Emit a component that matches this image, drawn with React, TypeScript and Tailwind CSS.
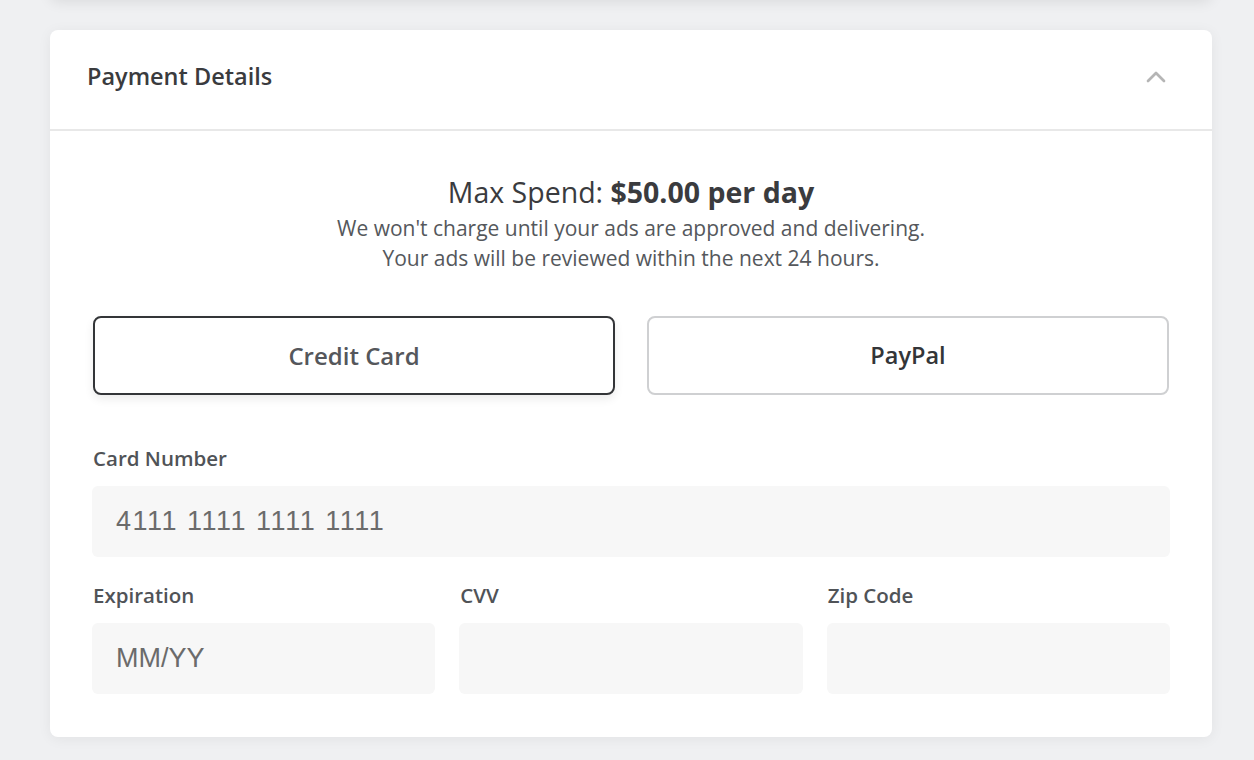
import { ChevronUp } from "lucide-react";

const font = { fontFamily: "'Open Sans', Lato, sans-serif" };

function Field({ label, placeholder, spaced }: { label: string; placeholder?: string; spaced?: boolean }) {
  return (
    <div className="flex flex-col">
      <label className="text-[20.5px] leading-[28px] font-semibold text-[#505357] pl-[1px]">{label}</label>
      <div className="mt-[14px] h-[71px] rounded-md bg-[#f7f7f7] flex items-center px-[24px]">
        {placeholder && (
          <span
            className={`text-[27px] text-[#6b6b6b] ${spaced ? "tracking-[1.5px]" : ""}`}
            style={{ fontFamily: "'Liberation Sans', Arial, sans-serif" }}
          >
            {placeholder}
          </span>
        )}
      </div>
    </div>
  );
}

export default function App() {
  return (
    <div className="min-h-screen bg-[#eff0f2] pl-[50px] pr-[42px] pb-10" style={font}>
      {/* bottom of previous card */}
      <div className="h-10 -mt-10 bg-white rounded-lg shadow-[0_2px_14px_rgba(0,0,0,0.09)]" />

      <div className="mt-[30px] bg-white rounded-lg shadow-[0_2px_14px_rgba(0,0,0,0.06)]">
        <div className="h-[101px] flex items-center justify-between pl-[37px] pr-[40px] pb-[5px] border-b-2 border-[#e8e8e8]">
          <h2 className="text-[23.5px] font-semibold text-[#3a3b3e]">Payment Details</h2>
          <ChevronUp className="w-8 h-8 text-[#b5b5b5]" strokeWidth={2} />
        </div>

        <div className="px-[42px] pt-[42px] pb-[43px]">
          <div className="text-center">
            <p className="text-[28.5px] leading-[38px] text-[#3a3b3e]">
              Max Spend: <span className="font-bold">$50.00 per day</span>
            </p>
            <p className="mt-[2px] text-[21px] leading-[30px] text-[#55585c]">
              We won't charge until your ads are approved and delivering.
              <br />
              Your ads will be reviewed within the next 24 hours.
            </p>
          </div>

          <div className="mt-[43px] grid grid-cols-2 gap-[32px] px-[1px]">
            <button className="h-[79px] rounded-lg border-2 border-[#333538] bg-white text-[24px] font-semibold text-[#55575b] shadow-[0_4px_10px_rgba(0,0,0,0.08)]">
              Credit Card
            </button>
            <button className="h-[79px] rounded-lg border-2 border-[#cfd0d2] bg-white text-[23.5px] font-semibold text-[#333538]">
              PayPal
            </button>
          </div>

          <div className="mt-[49px]">
            <Field label="Card Number" placeholder="4111 1111 1111 1111" spaced />
          </div>

          <div className="mt-[24px] grid grid-cols-3 gap-[24px]">
            <Field label="Expiration" placeholder="MM/YY" />
            <Field label="CVV" />
            <Field label="Zip Code" />
          </div>
        </div>
      </div>
    </div>
  );
}
